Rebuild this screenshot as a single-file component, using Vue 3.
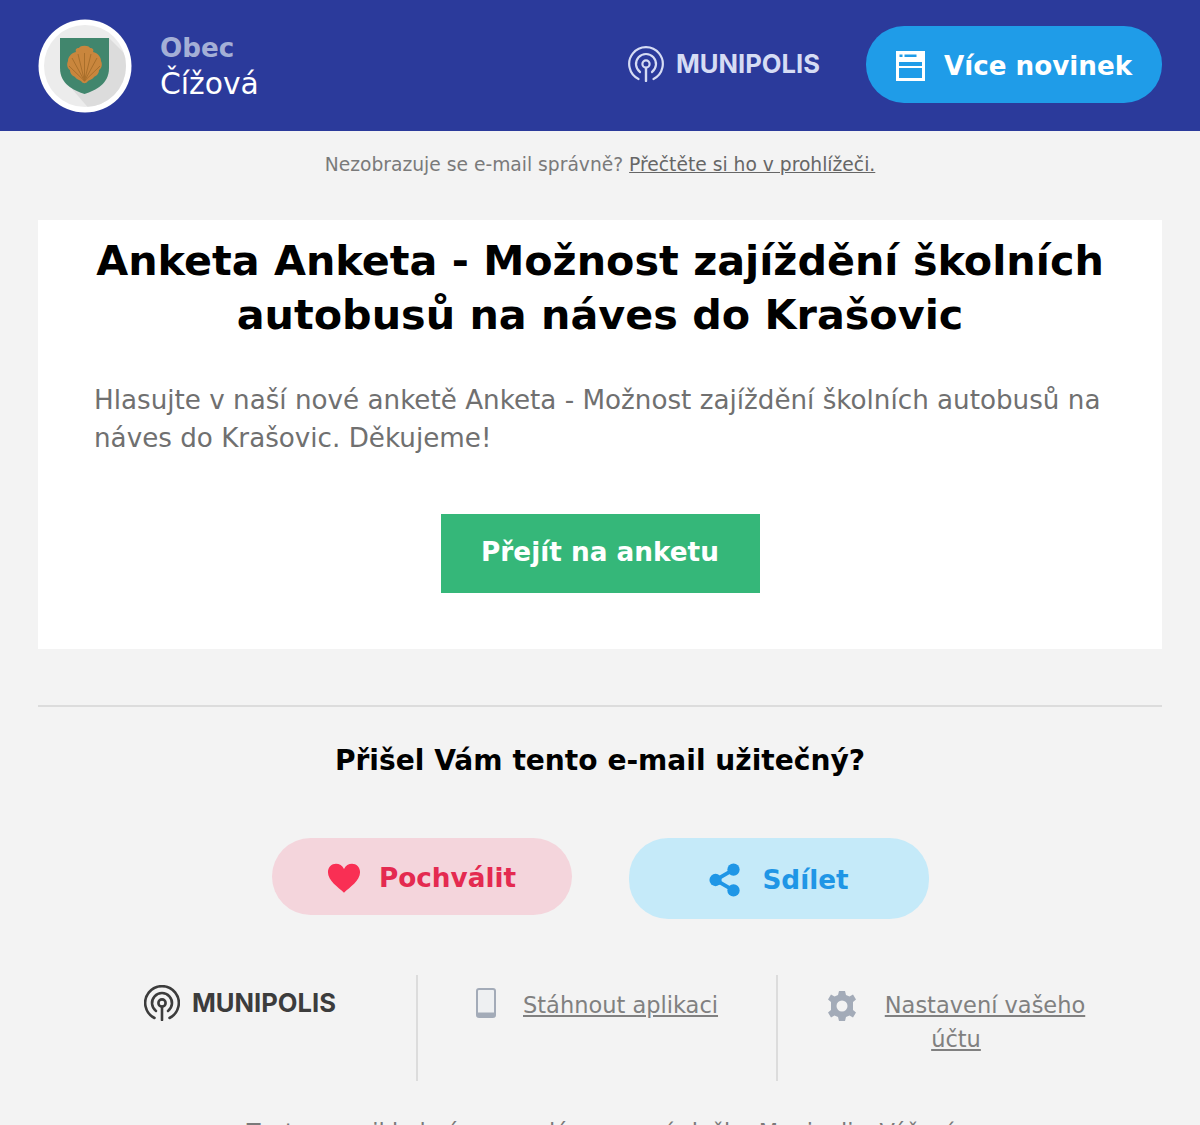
<template>
  <div class="page">
    <header class="top">
      <div class="brand">
        <div class="crest">
          <svg width="94" height="94" viewBox="0 0 94 94">
            <defs>
              <clipPath id="crest-clip"><circle cx="47" cy="47" r="41" /></clipPath>
            </defs>
            <circle cx="47" cy="47" r="46.5" fill="#fff" />
            <circle cx="47" cy="47" r="41" fill="#ececec" />
            <path d="M71 19 L100 48 L100 100 L60 100 L34 70 Z" fill="#dcdcdc" clip-path="url(#crest-clip)" />
            <path d="M22 19 H71 V49 C71 65 58 71 46.5 75 C35 71 22 65 22 49 Z" fill="#41866d" />
            <path d="M41 29 C42 26 51 26 52 29 C55 29 56 31 55 33 C60 34 63 38 63 42 C65 46 63 50 61 51 C61 55 58 57 56 58 C54 61 51 61 50 62 C48 65 45 65 43 62 C42 61 39 61 37 58 C35 57 32 55 32 51 C30 50 28 46 30 42 C30 38 33 34 38 33 C37 31 38 29 41 29 Z" fill="#c9863d" />
            <path d="M46.5 62 V34 M46.5 62 L40 35 M46.5 62 L53 35 M46.5 62 L34 39 M46.5 62 L59 39 M46.5 62 L31 47 M46.5 62 L62 47" stroke="#a96f2b" stroke-width="1" />
          </svg>
        </div>
        <div class="town">
          <span class="town-label">Obec</span>
          <span class="town-name">Čížová</span>
        </div>
      </div>
      <div class="top-right">
        <div class="logo logo-light">
          <svg width="36" height="36" viewBox="0 0 36 36" fill="none" stroke="currentColor">
            <path d="M10.5 33 A16.8 16.8 0 1 1 25.5 33" stroke-width="2.2" stroke-linecap="round" />
            <path d="M12 26 A10 10 0 1 1 24 26" stroke-width="2.2" stroke-linecap="round" />
            <circle cx="18" cy="18" r="3.6" stroke-width="2.2" />
            <path d="M18 22 V35" stroke-width="2.4" stroke-linecap="round" />
          </svg>
          <span class="logo-text">MUNIPOLIS</span>
        </div>
        <a class="news-btn">
          <svg width="29" height="30" viewBox="0 0 29 30">
            <rect width="29" height="30" fill="#fff" />
            <rect x="3" y="11" width="23" height="4" fill="#1f9ce8" />
            <rect x="3" y="17" width="23" height="10" fill="#1f9ce8" />
            <rect x="3.5" y="3.5" width="3" height="2.5" fill="#1f9ce8" />
            <rect x="8.5" y="3.5" width="12" height="2.5" fill="#1f9ce8" />
          </svg>
          <span>Více novinek</span>
        </a>
      </div>
    </header>

    <p class="browser-note">
      Nezobrazuje se e-mail správně? <a>Přečtěte si ho v prohlížeči.</a>
    </p>

    <main class="card">
      <h1>Anketa Anketa - Možnost zajíždění školních autobusů na náves do Krašovic</h1>
      <p class="lead">Hlasujte v naší nové anketě Anketa - Možnost zajíždění školních autobusů na náves do Krašovic. Děkujeme!</p>
      <a class="cta">Přejít na anketu</a>
    </main>

    <hr class="rule" />

    <h2>Přišel Vám tento e-mail užitečný?</h2>

    <div class="reactions">
      <a class="react react-like">
        <svg width="34" height="32" viewBox="0 0 36 32">
          <path d="M18 31.5 C12 26 1 19 1 10 C1 4.5 5 1 9.5 1 C13 1 16.5 3 18 6.5 C19.5 3 23 1 26.5 1 C31 1 35 4.5 35 10 C35 19 24 26 18 31.5 Z" fill="#f92f54" />
        </svg>
        <span>Pochválit</span>
      </a>
      <a class="react react-share">
        <svg width="34" height="36" viewBox="0 0 36 36">
          <path d="M27 7 L8 18 L27 29" fill="none" stroke="#1f96e6" stroke-width="4" />
          <circle cx="27" cy="7" r="6.5" fill="#1f96e6" />
          <circle cx="8" cy="18" r="6.5" fill="#1f96e6" />
          <circle cx="27" cy="29" r="6.5" fill="#1f96e6" />
        </svg>
        <span>Sdílet</span>
      </a>
    </div>

    <section class="links">
      <div class="link-col link-logo">
        <div class="logo logo-dark">
          <svg width="36" height="36" viewBox="0 0 36 36" fill="none" stroke="currentColor">
            <path d="M10.5 33 A16.8 16.8 0 1 1 25.5 33" stroke-width="2.6" stroke-linecap="round" />
            <path d="M12 26 A10 10 0 1 1 24 26" stroke-width="2.6" stroke-linecap="round" />
            <circle cx="18" cy="18" r="3.6" stroke-width="2.6" />
            <path d="M18 22 V35" stroke-width="2.6" stroke-linecap="round" />
          </svg>
          <span class="logo-text">MUNIPOLIS</span>
        </div>
      </div>
      <div class="link-col link-app">
        <svg width="20" height="30" viewBox="0 0 20 30">
          <rect x="1" y="1" width="18" height="28" rx="2" fill="#eef0f2" stroke="#a3abb8" stroke-width="2" />
          <rect x="1" y="24.5" width="18" height="4.5" fill="#a3abb8" />
        </svg>
        <a>Stáhnout aplikaci</a>
      </div>
      <div class="link-col link-settings">
        <p class="settings-text">
          <svg width="30" height="30" viewBox="0 0 30 30">
            <path d="M12 0 H18 L19 4 L22.5 5.5 L26 3.5 L29 8.5 L26 11 V19 L29 21.5 L26 26.5 L22.5 24.5 L19 26 L18 30 H12 L11 26 L7.5 24.5 L4 26.5 L1 21.5 L4 19 V11 L1 8.5 L4 3.5 L7.5 5.5 L11 4 Z" fill="#a3abb8" />
            <circle cx="15" cy="15" r="5.5" fill="#f3f3f3" />
          </svg>
          <a>Nastavení vašeho účtu</a>
        </p>
      </div>
    </section>

    <p class="fineprint">Tento e-mail byl vám rozeslán pomocí služby Munipolis. Vážení</p>
  </div>
</template>

<script setup>
</script>

<style>
html,
body {
  margin: 0;
  background: #f3f3f3;
}
</style>

<style scoped>
.page {
  font-family: "DejaVu Sans", sans-serif;
  background: #f3f3f3;
  height: 1125px;
  overflow: hidden;
  color: #000;
}

.top {
  height: 131px;
  background: #2b3a9b;
  padding: 0 38px;
  display: flex;
  align-items: center;
  justify-content: space-between;
}

.brand {
  display: flex;
  align-items: center;
  gap: 28px;
}

.crest {
  width: 94px;
  height: 94px;
}

.town {
  display: flex;
  flex-direction: column;
  line-height: 36px;
}

.town-label {
  font-size: 26.2px;
  font-weight: 700;
  color: #a4afd6;
}

.town-name {
  font-size: 29.8px;
  color: #fff;
}

.top-right {
  display: flex;
  align-items: center;
  gap: 46px;
}

.logo {
  display: flex;
  align-items: center;
  gap: 12px;
}

.logo-text {
  font-family: Inter, sans-serif;
  font-weight: 700;
  font-size: 25.6px;
}

.logo-light {
  color: #d6dcf4;
  margin-bottom: 4px;
}

.logo-dark {
  color: #3c3c3c;
}

.news-btn {
  width: 296px;
  height: 77px;
  border-radius: 38px;
  background: #1f9ce8;
  color: #fff;
  font-size: 26.2px;
  font-weight: 700;
  display: flex;
  align-items: center;
  justify-content: center;
  gap: 19px;
  box-sizing: border-box;
  padding-top: 2px;
  margin-bottom: 2px;
}

.browser-note {
  margin: 0;
  padding-top: 22px;
  text-align: center;
  font-size: 18.7px;
  line-height: 23px;
  color: #7a7a7a;
}

.browser-note a {
  color: #666;
  text-decoration: underline;
}

.card {
  margin: 44px 38px 0;
  height: 429px;
  background: #fff;
  padding-top: 14px;
  box-sizing: border-box;
  display: flex;
  flex-direction: column;
  align-items: center;
}

h1 {
  margin: 0;
  font-size: 41.3px;
  line-height: 54px;
  font-weight: 700;
  text-align: center;
}

.lead {
  margin: 39px 0 0;
  padding: 0 56px;
  font-size: 26.2px;
  line-height: 38px;
  color: #707070;
  align-self: stretch;
}

.cta {
  margin-top: 57px;
  width: 319px;
  height: 79px;
  background: #35b779;
  color: #fff;
  font-size: 26.3px;
  font-weight: 700;
  display: flex;
  align-items: center;
  justify-content: center;
  box-sizing: border-box;
  padding-bottom: 4px;
}

.rule {
  margin: 56px 38px 0;
  border: 0;
  border-top: 2px solid #dcdcdc;
}

h2 {
  margin: 36px 0 0;
  text-align: center;
  font-size: 28.1px;
  line-height: 36px;
  font-weight: 700;
}

.reactions {
  margin-top: 59px;
  display: flex;
  justify-content: center;
  gap: 57px;
}

.react {
  width: 300px;
  border-radius: 39px;
  display: flex;
  align-items: center;
  justify-content: center;
  font-size: 26.3px;
  font-weight: 700;
  box-sizing: border-box;
  padding-top: 2px;
}

.react-like {
  height: 77px;
  gap: 18px;
  background: #f4d5dc;
  color: #e42a50;
}

.react-share {
  height: 81px;
  gap: 20px;
  background: #c5eaf9;
  color: #1f96e6;
}

.links {
  margin-top: 56px;
  padding: 0 38px;
  display: grid;
  grid-template-columns: 380px 360px 1fr;
  height: 106px;
  font-size: 22.5px;
  line-height: 34px;
  color: #808080;
}

.link-col {
  display: flex;
  align-items: flex-start;
}

.link-col a {
  text-decoration: underline;
  color: #808080;
}

.link-logo {
  border-right: 2px solid #dcdcdc;
  justify-content: center;
  padding: 10px 0 0 26px;
}

.link-app {
  border-right: 2px solid #dcdcdc;
  padding: 13px 0 0 58px;
  gap: 27px;
}

.link-settings {
  padding: 13px 0 0 47px;
}

.link-app svg {
  flex-shrink: 0;
}

.settings-text {
  margin: 0;
  width: 262px;
  text-align: center;
}

.settings-text svg {
  margin-right: 28px;
  vertical-align: -8px;
}

.fineprint {
  margin: 34px 0 0;
  text-align: center;
  font-size: 22.5px;
  line-height: 34px;
  color: #7a7a7a;
}
</style>
